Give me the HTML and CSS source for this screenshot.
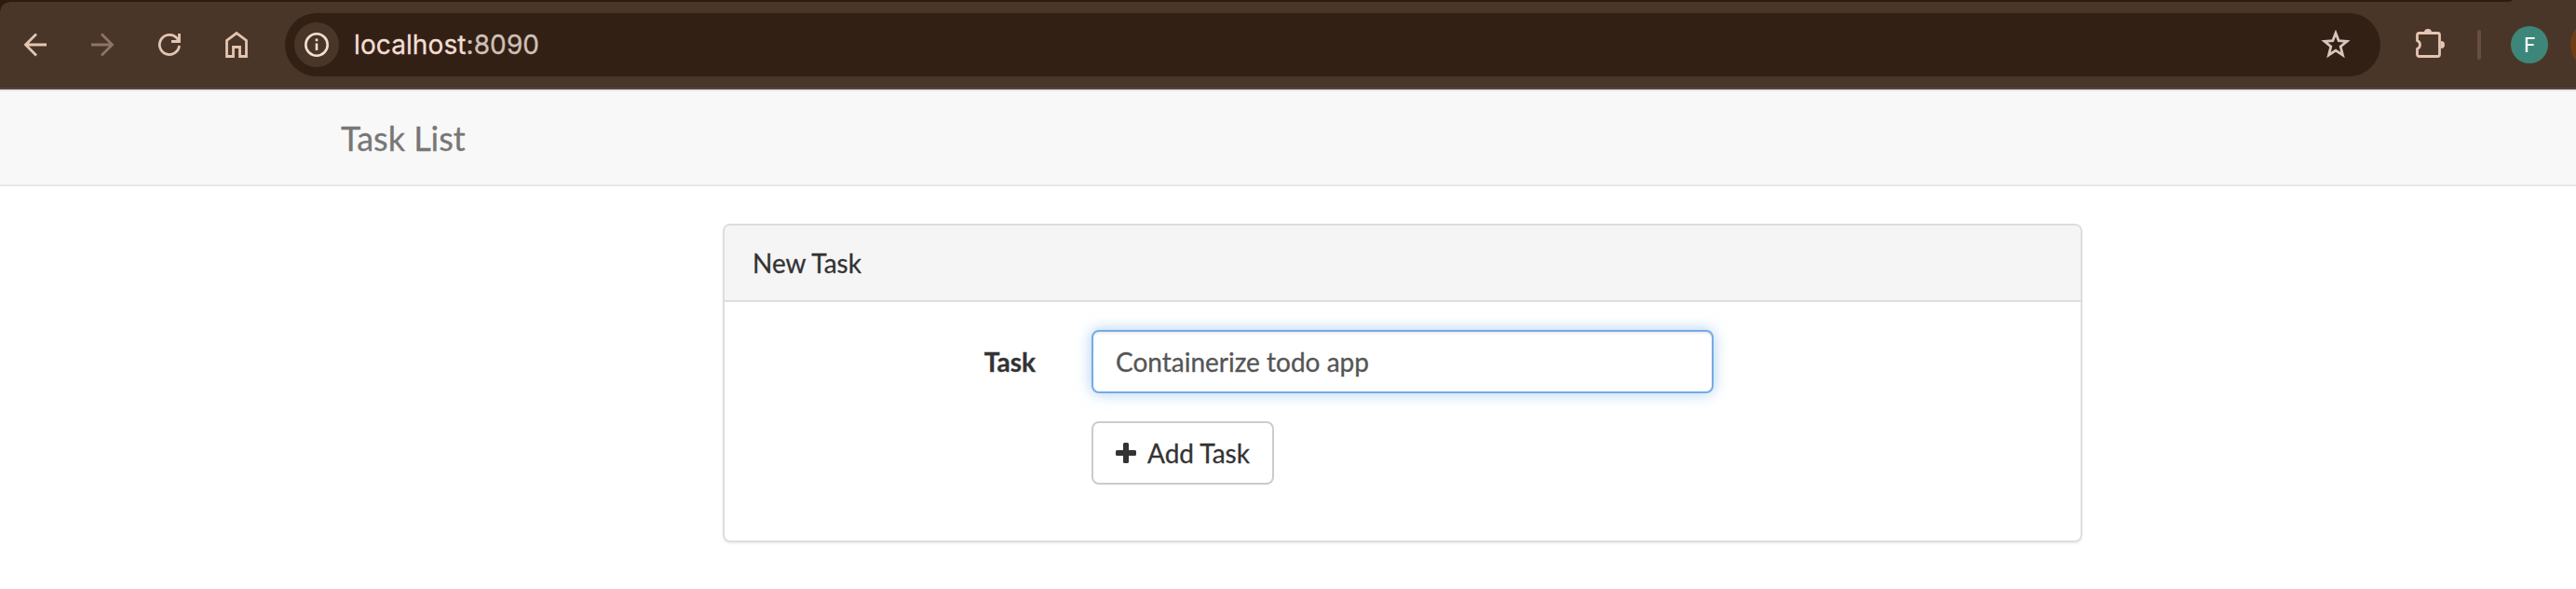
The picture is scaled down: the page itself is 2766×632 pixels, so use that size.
FILE: index.html
```html
<!DOCTYPE html>
<html lang="en">
<head>
<meta charset="utf-8">
<title>Task List</title>
<link rel="stylesheet" href="styles.css">
</head>
<body>
<header class="toolbar">
  <div class="nav-icons">
    <svg class="icon" viewBox="0 0 32 32"><path d="M28 16H6M17 4.500 5.500 16 17 27.500"/></svg>
    <svg class="icon dim" viewBox="0 0 32 32"><path d="M4 16h22M15 4.500 26.500 16 15 27.500"/></svg>
    <svg class="icon" viewBox="0 0 32 32"><path d="M26.500 17A10.600 10.600 0 1 1 24 9l2.500 3.500M26.500 4v8.500H18"/></svg>
    <svg class="icon" viewBox="0 0 32 32"><path d="M5.500 28.500V11.500L16 3.600l10.500 7.900v17H19.500V18.500h-7v10z"/></svg>
  </div>
  <div class="address">
    <span class="info"><svg class="info-icon" viewBox="0 0 28 28"><circle cx="14" cy="14" r="11.700"/><path d="M14 12.500V20M14 7.500v2.700"/></svg></span>
    <span class="url">localhost<span class="port">:8090</span></span>
    <svg class="star" viewBox="0 0 32 32"><path d="M16 3.500 19.200 11.700 28 12.300 21.200 18 23.500 27 16 22.100 8.500 27 10.800 18 4 12.300 12.800 11.700z"/></svg>
  </div>
  <svg class="puzzle" viewBox="0 0 34 34"><path class="tabs" d="M11 5a4 4 0 0 1 8 0zM29 14a4 4 0 0 1 0 8z"/><path d="M3.500 7.500a2 2 0 0 1 2-2h20a2 2 0 0 1 2 2v21a2 2 0 0 1-2 2h-20a2 2 0 0 1-2-2v-6a4.900 4.900 0 0 0 0-9z"/></svg>
  <span class="divider"></span>
  <span class="avatar">F</span>
  <span class="next-avatar"></span>
</header>
<nav class="navbar"><a class="brand">Task List</a></nav>
<main class="container">
  <section class="panel">
    <div class="panel-heading">New Task</div>
    <form class="panel-body">
      <label class="label" for="task">Task</label>
      <input class="field" id="task" type="text" value="Containerize todo app">
      <button class="button" type="button"><svg class="plus" viewBox="0 0 22 22"><path d="M9.500 0h3a1.500 1.500 0 0 1 1.500 1.500V8h6.500A1.500 1.500 0 0 1 22 9.500v3a1.500 1.500 0 0 1-1.500 1.500H14v6.500a1.500 1.500 0 0 1-1.500 1.500h-3A1.500 1.500 0 0 1 8 20.500V14H1.500A1.500 1.500 0 0 1 0 12.500v-3A1.500 1.500 0 0 1 1.500 8H8V1.500A1.500 1.500 0 0 1 9.500 0z"/></svg>Add Task</button>
    </form>
  </section>
</main>
</body>
</html>
```
FILE: styles.css
```css
* { box-sizing: border-box; }
body {
  margin: 0;
  height: 632px;
  overflow: hidden;
  background: #fff;
  color: #333;
  font: 28px/40px Lato, sans-serif;
  -webkit-text-stroke: .3px;
}
.toolbar {
  position: relative;
  display: flex;
  align-items: center;
  height: 96px;
  overflow: hidden;
  background: radial-gradient(circle at 100% 100%, #4a3628 9px, #2d1b10 10px) 0 2px / 10px 10px no-repeat #4a3628;
  border-bottom: 2px solid #554540;
}
.toolbar > * { flex: none; }
.toolbar::before {
  content: "";
  position: absolute;
  top: 0;
  left: 0;
  width: 2698px;
  height: 2px;
  background: #2d1b10;
  border-bottom-right-radius: 8px 2px;
}
.nav-icons { display: flex; gap: 40px; margin: 2px 0 0 22px; }
.icon { width: 32px; height: 32px; }
.icon, .star, .puzzle, .info-icon { fill: none; stroke: #e4c5b2; stroke-width: 2.8; }
.icon.dim { stroke: #8d7468; }
.address {
  display: flex;
  align-items: center;
  width: 2250px;
  height: 68px;
  margin: 2px 0 0 36px;
  padding: 0 32px 0 10px;
  border-radius: 34px;
  background: #322015;
}
.info {
  display: grid;
  place-items: center;
  width: 48px;
  height: 48px;
  border-radius: 50%;
  background: #4a3628;
}
.address .info-icon { width: 28px; height: 28px; stroke: #f3ded3; stroke-width: 2.6; }
.url { margin-left: 16px; color: #f3ded3; font: 28px/40px Inter, sans-serif; letter-spacing: .1px; }
.port { color: #d0c0b7; }
.address .star { width: 32px; height: 32px; margin-left: auto; stroke: #d7c5bd; }
.puzzle { width: 34px; height: 34px; margin: 0 0 0 36px; }
.puzzle .tabs { fill: #e4c5b2; stroke: none; }
.divider { width: 4px; height: 32px; margin: 2px 0 0 34px; border-radius: 2px; background: #684e42; }
.avatar {
  width: 40px;
  height: 40px;
  margin: 2px 0 0 32px;
  border-radius: 50%;
  background: #3d877a;
  color: #fff;
  font: 22px/41px Roboto, sans-serif;
  text-align: center;
  -webkit-text-stroke: 0;
}
.next-avatar { width: 56px; height: 56px; margin: 2px 0 0 24px; border-radius: 50%; background: #6e3d16; }
.navbar {
  display: flex;
  align-items: center;
  height: 104px;
  padding-left: 366px;
  border: solid #e7e7e7;
  border-width: 2px 0;
  background: #f8f8f8;
}
.brand { color: #777; font-size: 36px; }
.container { padding: 40px 0 0 776px; }
.panel {
  width: 1460px;
  border: 2px solid #ddd;
  border-radius: 8px;
  box-shadow: 0 2px 2px rgba(0, 0, 0, .05);
}
.panel-heading {
  height: 82px;
  padding: 20px 30px;
  border-bottom: 2px solid #ddd;
  border-radius: 6px 6px 0 0;
  background: #f5f5f5;
}
.panel-body {
  display: grid;
  grid-template-columns: 334px 668px;
  gap: 30px 60px;
  padding: 30px 0 60px;
}
.label { padding-top: 14px; text-align: right; font-weight: 700; }
.field {
  height: 68px;
  padding: 12px 24px;
  border: 2px solid #74abe6;
  border-radius: 8px;
  outline: 0;
  box-shadow: inset 0 2px 2px rgba(0, 0, 0, .075), 0 0 16px rgba(116, 171, 230, .6);
  color: #555;
  font: 28px/40px Lato, sans-serif;
  -webkit-text-stroke: .3px;
}
.button {
  grid-column: 2;
  justify-self: start;
  display: flex;
  align-items: center;
  height: 68px;
  padding: 12px 24px;
  border: 2px solid #ccc;
  border-radius: 8px;
  background: #fff;
  color: #333;
  font: 28px/40px Lato, sans-serif;
  -webkit-text-stroke: .3px;
}
.plus { width: 22px; height: 22px; margin-right: 12px; fill: #333; }
```
